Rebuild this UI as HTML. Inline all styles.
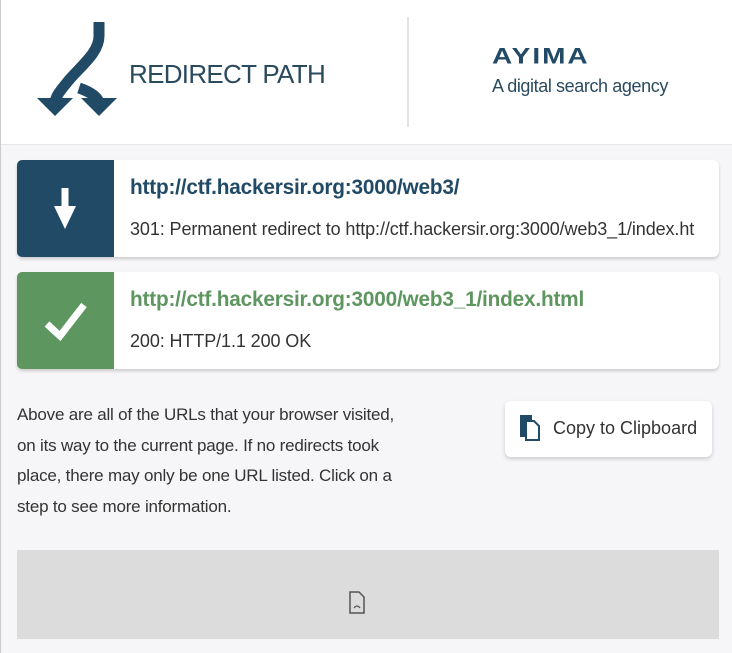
<!DOCTYPE html>
<html><head><meta charset="utf-8"><style>
*{margin:0;padding:0;box-sizing:border-box}
body{width:732px;height:653px;background:#f6f6f8;font-family:"Liberation Sans",sans-serif;position:relative;overflow:hidden;border-left:1px solid #ccc}
.hdr{position:absolute;left:0;top:0;width:732px;height:145px;background:#fff;border-bottom:1px solid #e6e6e9}
.card{position:absolute;left:16px;width:702px;background:#fff;border-radius:6px;box-shadow:0 2px 3px rgba(0,0,0,.18)}
.ib{position:absolute;left:0;top:0;width:97px;height:100%;border-radius:5px 0 0 5px}
.t1{position:absolute;left:113px;top:16px;font-size:20.8px;font-weight:bold;letter-spacing:-.2px;white-space:nowrap}
.t2{position:absolute;left:113px;top:59px;font-size:18px;color:#333;white-space:nowrap;letter-spacing:-.1px}
.p{position:absolute;left:16px;top:400px;width:398px;font-size:17px;line-height:30.5px;color:#333;letter-spacing:-.2px}
.btn{position:absolute;left:504px;top:401px;width:207px;height:56px;background:#fff;border-radius:6px;box-shadow:0 2px 4px rgba(0,0,0,.18);font-size:18px;color:#333}
.gray{position:absolute;left:16px;top:550px;width:702px;height:89px;background:#dcdcdc}
</style></head><body>
<div class="hdr">
<svg style="position:absolute;left:30px;top:18px" width="95" height="100" viewBox="0 0 95 100">
<path d="M68 4 V18 C68 34 52 46 38 62 C30 72 24 78 24 86" fill="none" stroke="#214a66" stroke-width="11"/>
<polygon points="6,80 42,80 24,98" fill="#214a66"/>
<path d="M48 70 C60 74 68 80 68 86" fill="none" stroke="#214a66" stroke-width="11"/>
<polygon points="50,80 86,80 68,98" fill="#214a66"/>
</svg>
<div style="position:absolute;left:128px;top:59px;font-size:26px;color:#2a4a5e;letter-spacing:-.7px">REDIRECT PATH</div>
<div style="position:absolute;left:406px;top:17px;width:2px;height:110px;background:#e3e3e3"></div>
<div style="position:absolute;left:491px;top:44px;font-size:28px;font-weight:bold;color:#214a66;letter-spacing:2px;transform:scaleY(.78);transform-origin:top">AYIMA</div>
<div style="position:absolute;left:491px;top:76px;font-size:18px;color:#2a4a5e;letter-spacing:-.4px">A digital search agency</div>
</div>
<div class="card" style="top:160px;height:97px">
<div class="ib" style="background:#214a66"><svg width="97" height="97"><rect x="44.5" y="28" width="7" height="20" fill="#fff"/><polygon points="37,46 59,46 48,69" fill="#fff"/></svg></div>
<div class="t1" style="color:#214a66">http://ctf.hackersir.org:3000/web3/</div>
<div class="t2">301: Permanent redirect to http://ctf.hackersir.org:3000/web3_1/index.ht</div>
</div>
<div class="card" style="top:272px;height:97px">
<div class="ib" style="background:#5e9660"><svg width="97" height="97"><path d="M30 52 L43 64 L67 33" fill="none" stroke="#fff" stroke-width="7"/></svg></div>
<div class="t1" style="color:#5e9660">http://ctf.hackersir.org:3000/web3_1/index.html</div>
<div class="t2">200: HTTP/1.1 200 OK</div>
</div>
<div class="p">Above are all of the URLs that your browser visited, on its way to the current page. If no redirects took place, there may only be one URL listed. Click on a step to see more information.</div>
<div class="btn"><svg style="position:absolute;left:14px;top:13px" width="22" height="28"><rect x="1" y="1" width="12" height="22" fill="#214a66"/><path d="M7 7 H15 L20 12 V26 H7 Z" fill="#fff" stroke="#214a66" stroke-width="2"/></svg><span style="position:absolute;left:48px;top:17px">Copy to Clipboard</span></div>
<div class="gray"><svg style="position:absolute;left:332px;top:41px" width="16" height="24"><path d="M1 1 H10 L15 6 V22 H1 Z" fill="none" stroke="#555" stroke-width="1.5"/><path d="M5 17 Q8 13 11 17" fill="none" stroke="#555" stroke-width="1.3"/></svg></div>
</body></html>
